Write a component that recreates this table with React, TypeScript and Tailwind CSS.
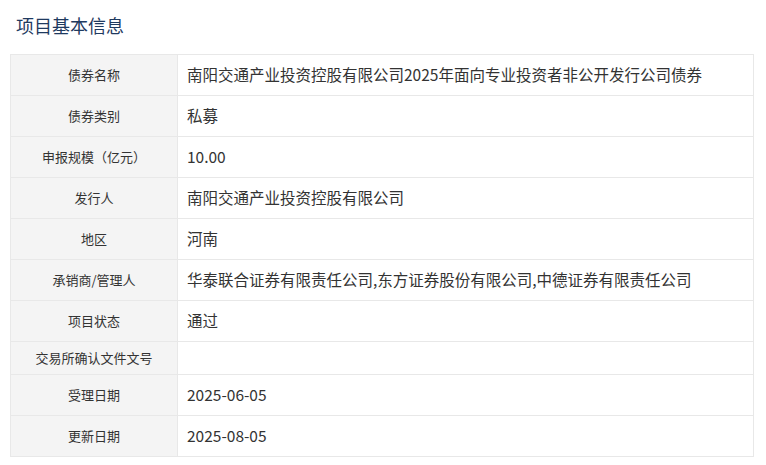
import React from 'react';

type Row = { label: string; value: string; short?: boolean };

const rows: Row[] = [
  { label: '债券名称', value: '南阳交通产业投资控股有限公司2025年面向专业投资者非公开发行公司债券' },
  { label: '债券类别', value: '私募' },
  { label: '申报规模（亿元）', value: '10.00' },
  { label: '发行人', value: '南阳交通产业投资控股有限公司' },
  { label: '地区', value: '河南' },
  { label: '承销商/管理人', value: '华泰联合证券有限责任公司,东方证券股份有限公司,中德证券有限责任公司' },
  { label: '项目状态', value: '通过' },
  { label: '交易所确认文件文号', value: '', short: true },
  { label: '受理日期', value: '2025-06-05' },
  { label: '更新日期', value: '2025-08-05' },
];

const InfoRow: React.FC<{ row: Row }> = ({ row }) => (
  <div className={`flex border-b border-[#e8e8e8] ${row.short ? 'h-[33px]' : 'h-[41px]'}`}>
    <div className="w-[167px] shrink-0 bg-[#f4f4f4] border-r border-[#e8e8e8] flex items-center justify-center text-[13px] text-[#333]">
      {row.label}
    </div>
    <div className="flex-1 flex items-center pl-[9px] text-[15.5px] text-[#333]">{row.value}</div>
  </div>
);

export default function App() {
  return (
    <div className="w-[766px] h-[465px] bg-white font-['Noto_Sans_CJK_SC',sans-serif]">
      <div className="h-[54px] pt-[14px] pl-[16px] text-[18px] leading-[22px] text-[#1f3a5f]">项目基本信息</div>
      <div className="ml-[10px] w-[744px] border-t border-l border-r border-[#e8e8e8]">
        {rows.map((r) => (
          <InfoRow key={r.label} row={r} />
        ))}
      </div>
    </div>
  );
}
